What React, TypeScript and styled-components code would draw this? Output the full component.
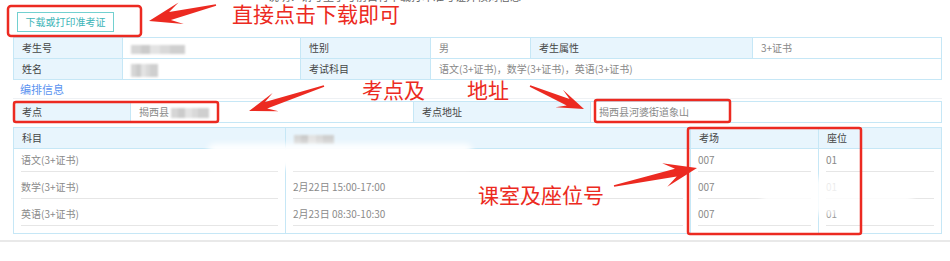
import React from "react";
import styled, { createGlobalStyle } from "styled-components";

const GlobalStyle = createGlobalStyle`
  html, body { margin: 0; padding: 0; background: #fff; }
  body { font-family: "Noto Sans CJK SC", "Noto Sans", sans-serif; }
`;

const FONT = `"Noto Sans CJK SC", "Noto Sans", sans-serif`;
const RED = "#ec2a21";

const Page = styled.div`
  position: relative;
  width: 950px;
  height: 261px;
  overflow: hidden;
  background: #fff;
  font-family: ${FONT};
  font-size: 10px;
`;

const ClippedNotice = styled.div`
  height: 3px;
  overflow: hidden;
  padding-left: 268px;
  color: #666;
  font-size: 11px;
  line-height: 14px;
  & > span {
    display: block;
    margin-top: -11px;
    white-space: nowrap;
  }
`;

const Toolbar = styled.div`
  height: 34px;
  box-sizing: border-box;
  padding: 9px 0 0 17px;
`;

const DownloadButton = styled.button`
  width: 97px;
  height: 20px;
  padding: 0;
  border: 1px solid #72d0d0;
  background: #fff;
  color: #3db5b8;
  font-family: ${FONT};
  font-size: 10px;
  line-height: 18px;
  cursor: pointer;
`;

const Table = styled.table<{ $mt?: number }>`
  width: 929px;
  margin: ${(p) => p.$mt ?? 0}px 0 0 13px;
  border-collapse: collapse;
  table-layout: fixed;
  border: 1px solid #b3def2;
`;

const Cell = styled.td<{ $label?: boolean }>`
  height: 21px;
  box-sizing: border-box;
  padding: 0 8px;
  border: 1px solid #c6e7f6;
  background: ${(p) => (p.$label ? "#e8f5fd" : "#fff")};
  color: ${(p) => (p.$label ? "#444" : "#888")};
  font-size: 10px;
  line-height: 20px;
  white-space: nowrap;
  overflow: hidden;
`;

const HeadCell = styled.th`
  height: 21px;
  box-sizing: border-box;
  padding: 0 8px;
  border: 1px solid #c6e7f6;
  background: #e8f5fd;
  color: #444;
  font-weight: normal;
  font-size: 10px;
  line-height: 20px;
  text-align: left;
  white-space: nowrap;
`;

const ListCell = styled.td`
  vertical-align: top;
  padding: 0 7px 7px;
  border: 1px solid #c6e7f6;
  background: #fff;
`;

const ListItem = styled.div`
  height: 22px;
  line-height: 22px;
  border-bottom: 1px solid #e6e6e6;
  color: #8a8a8a;
  font-size: 10px;
  white-space: nowrap;
  & + & {
    margin-top: 4px;
  }
`;

const SectionTitle = styled.div`
  margin: 0 8px 0 13px;
  height: 18px;
  padding-left: 7px;
  line-height: 19px;
  color: #5a93f0;
  font-size: 11px;
  border-bottom: 1px solid #eef1f4;
`;

const Redacted = styled.span<{ $w: number; $h: number }>`
  display: inline-block;
  width: ${(p) => p.$w}px;
  height: ${(p) => p.$h}px;
  vertical-align: middle;
  background: linear-gradient(
    90deg,
    #d6d6d6 0 18%,
    #cbcbcb 18% 36%,
    #e3e3e3 36% 54%,
    #d9d9d9 54% 72%,
    #cfcfcf 72% 100%
  );
  filter: blur(0.8px);
`;

const BottomRule = styled.div`
  margin-top: 6px;
  height: 2px;
  background: #e9e9e9;
`;

const Overlay = styled.svg`
  position: absolute;
  left: 0;
  top: 0;
  pointer-events: none;
`;

const Callout = styled.div<{ $x: number; $y: number }>`
  position: absolute;
  left: ${(p) => p.$x}px;
  top: ${(p) => p.$y}px;
  color: ${RED};
  font-family: ${FONT};
  font-size: 21px;
  line-height: 21px;
  white-space: nowrap;
`;

const Hidden = styled.span`
  color: transparent;
`;

const Smudge = styled.div<{ $x: number; $y: number; $w: number; $h: number; $o?: number }>`
  position: absolute;
  left: ${(p) => p.$x}px;
  top: ${(p) => p.$y}px;
  width: ${(p) => p.$w}px;
  height: ${(p) => p.$h}px;
  background: #fff;
  opacity: ${(p) => p.$o ?? 1};
  filter: blur(3px);
  border-radius: 6px;
  pointer-events: none;
`;

function arrow(
  tx: number,
  ty: number,
  hx: number,
  hy: number,
  headLen: number,
  headW: number,
  shaftW: number
) {
  const dx = hx - tx;
  const dy = hy - ty;
  const L = Math.hypot(dx, dy);
  const ux = dx / L;
  const uy = dy / L;
  const nx = -uy;
  const ny = ux;
  const bx = hx - ux * (headLen + 3);
  const by = hy - uy * (headLen + 3);
  const jx = hx - ux * headLen * 0.72;
  const jy = hy - uy * headLen * 0.72;
  const pts = [
    [hx, hy],
    [bx + (nx * headW) / 2, by + (ny * headW) / 2],
    [jx + (nx * shaftW) / 2, jy + (ny * shaftW) / 2],
    [tx + nx * 0.8, ty + ny * 0.8],
    [tx - nx * 0.8, ty - ny * 0.8],
    [jx - (nx * shaftW) / 2, jy - (ny * shaftW) / 2],
    [bx - (nx * headW) / 2, by - (ny * headW) / 2],
  ];
  return pts.map((q) => q.map((v) => v.toFixed(1)).join(",")).join(" ");
}

const schedule = [
  { subject: "语文(3+证书)", time: "", room: "007", seat: "01" },
  { subject: "数学(3+证书)", time: "2月22日 15:00-17:00", room: "007", seat: "01" },
  { subject: "英语(3+证书)", time: "2月23日 08:30-10:30", room: "007", seat: "01" },
];

export default function App() {
  return (
    <Page>
      <GlobalStyle />
      <ClippedNotice>
        <span>说明：请考生于考前自行下载打印准考证并核对信息</span>
      </ClippedNotice>
      <Toolbar>
        <DownloadButton>下载或打印准考证</DownloadButton>
      </Toolbar>

      <Table>
        <colgroup>
          <col style={{ width: 109 }} />
          <col style={{ width: 178 }} />
          <col style={{ width: 130 }} />
          <col style={{ width: 100 }} />
          <col style={{ width: 222 }} />
          <col />
        </colgroup>
        <tbody>
          <tr>
            <Cell $label>考生号</Cell>
            <Cell>
              <Redacted $w={54} $h={9} />
            </Cell>
            <Cell $label>性别</Cell>
            <Cell>男</Cell>
            <Cell $label>考生属性</Cell>
            <Cell>3+证书</Cell>
          </tr>
          <tr>
            <Cell $label>姓名</Cell>
            <Cell>
              <Redacted $w={27} $h={13} />
            </Cell>
            <Cell $label>考试科目</Cell>
            <Cell colSpan={3}>语文(3+证书)，数学(3+证书)，英语(3+证书)</Cell>
          </tr>
        </tbody>
      </Table>

      <SectionTitle>编排信息</SectionTitle>

      <Table $mt={2}>
        <colgroup>
          <col style={{ width: 117 }} />
          <col style={{ width: 283 }} />
          <col style={{ width: 177 }} />
          <col />
        </colgroup>
        <tbody>
          <tr>
            <Cell $label>考点</Cell>
            <Cell>
              揭西县 <Redacted $w={38} $h={10} />
            </Cell>
            <Cell $label>考点地址</Cell>
            <Cell>揭西县河婆街道象山</Cell>
          </tr>
        </tbody>
      </Table>

      <Table $mt={4}>
        <colgroup>
          <col style={{ width: 272 }} />
          <col style={{ width: 405 }} />
          <col style={{ width: 128 }} />
          <col />
        </colgroup>
        <thead>
          <tr>
            <HeadCell>科目</HeadCell>
            <HeadCell>
              <Redacted $w={40} $h={9} />
            </HeadCell>
            <HeadCell>考场</HeadCell>
            <HeadCell>座位</HeadCell>
          </tr>
        </thead>
        <tbody>
          <tr>
            <ListCell>
              {schedule.map((r) => (
                <ListItem key={r.subject}>{r.subject}</ListItem>
              ))}
            </ListCell>
            <ListCell>
              {schedule.map((r) => (
                <ListItem key={r.subject}>{r.time}</ListItem>
              ))}
            </ListCell>
            <ListCell>
              {schedule.map((r) => (
                <ListItem key={r.subject}>{r.room}</ListItem>
              ))}
            </ListCell>
            <ListCell>
              {schedule.map((r) => (
                <ListItem key={r.subject}>{r.seat}</ListItem>
              ))}
            </ListCell>
          </tr>
        </tbody>
      </Table>

      <BottomRule />

      <Smudge $x={208} $y={144} $w={264} $h={24} />
      <Smudge $x={762} $y={178} $w={150} $h={36} $o={0.85} />

      <Overlay width={950} height={261} viewBox="0 0 950 261">
        <g fill="none" stroke={RED} strokeWidth={2.5}>
          <rect x={8} y={6} width={133} height={30} rx={3} />
          <rect x={14} y={102} width={204} height={20} rx={2} />
          <rect x={595} y={100} width={135} height={22} rx={2} />
          <rect x={688} y={128} width={173} height={106} rx={2} />
        </g>
        <g fill={RED}>
          <polygon points={arrow(216, 5, 149, 21, 30, 22, 8)} />
          <polygon points={arrow(324, 86, 249, 111, 25, 19, 7)} />
          <polygon points={arrow(530, 86, 584, 109, 24, 19, 7)} />
          <polygon points={arrow(614, 186, 697, 168, 30, 24, 8)} />
        </g>
      </Overlay>

      <Callout $x={232} $y={3}>直接点击下载即可</Callout>
      <Callout $x={362} $y={79}>
        考点及<Hidden>所在</Hidden>地址
      </Callout>
      <Callout $x={478} $y={184}>课室及座位号</Callout>
    </Page>
  );
}
